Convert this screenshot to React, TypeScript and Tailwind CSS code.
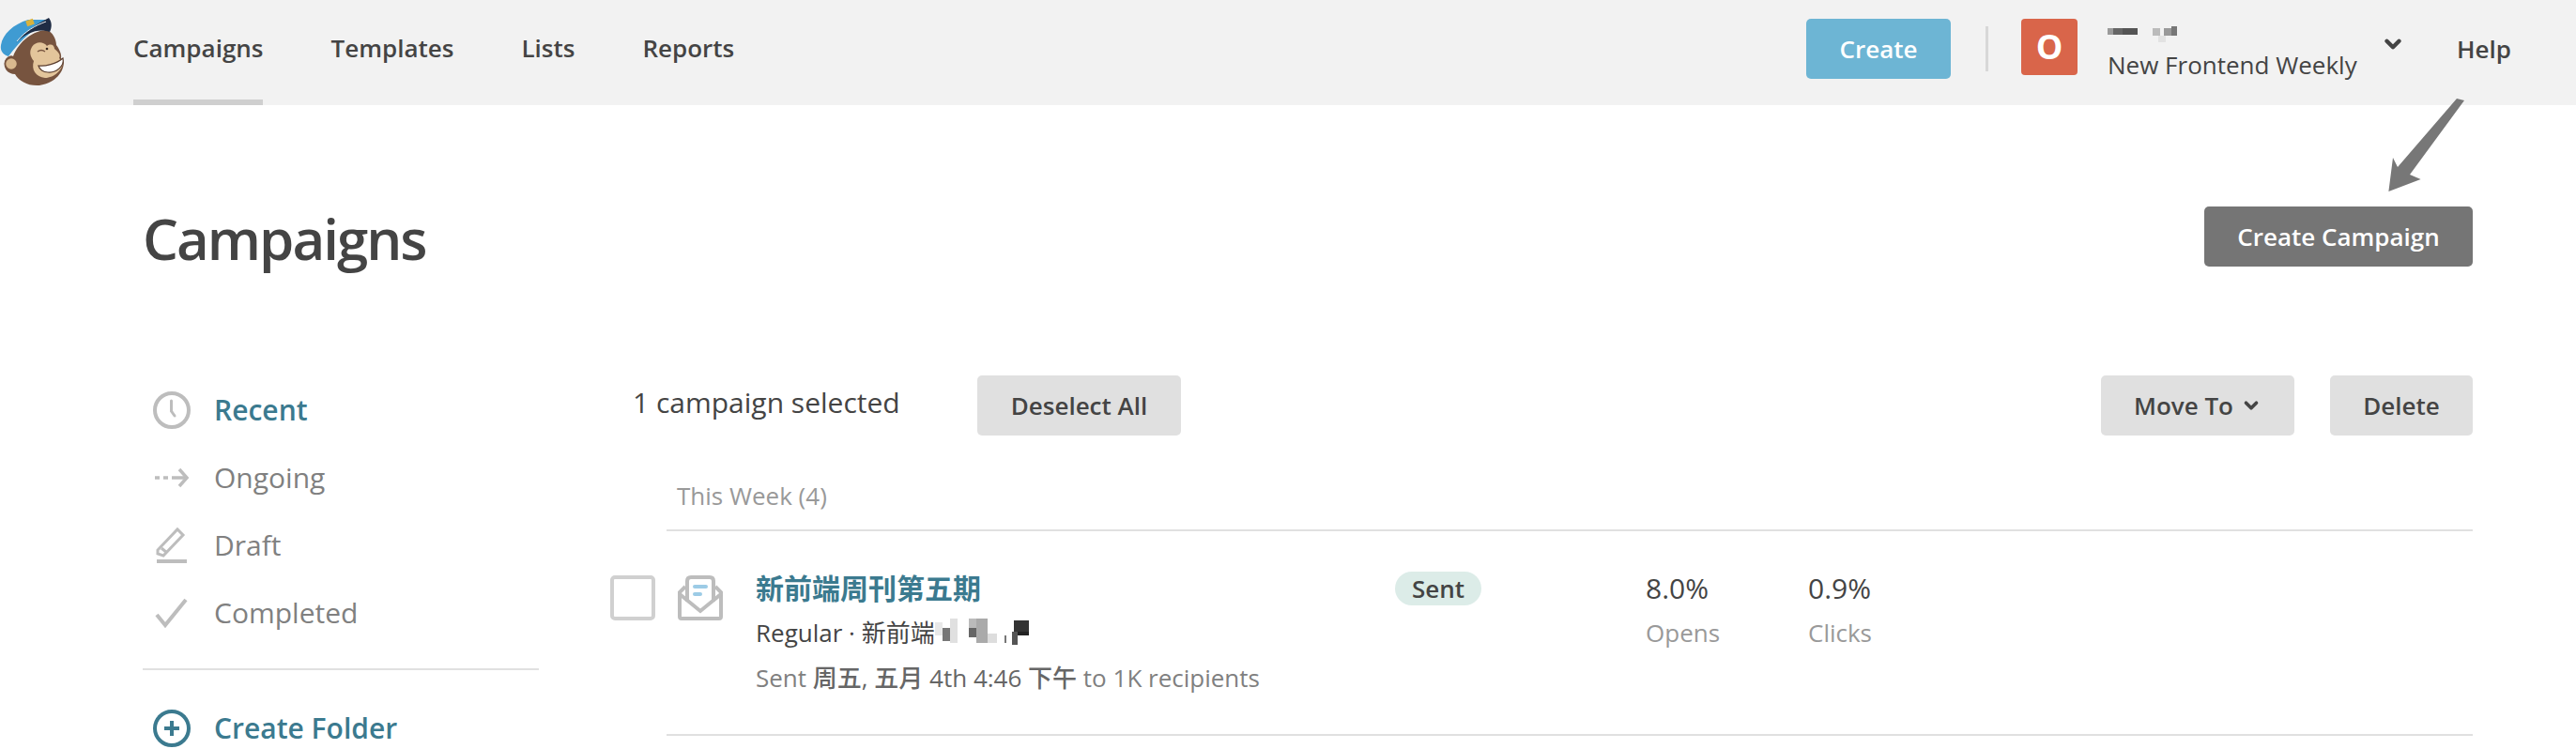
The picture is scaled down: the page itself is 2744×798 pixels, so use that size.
import React from "react";
import { ChevronDown } from "lucide-react";

const font = { fontFamily: '"Open Sans", "Noto Sans CJK SC", sans-serif' };

const Mascot = () => (
  <svg width="72" height="100" viewBox="0 0 72 100" className="shrink-0">
    <path d="M14 60 C20 44 36 32 50 32 C56 34 60 42 60 48 C63 52 66 58 65 62 L68 66 C68 76 60 88 42 91 C30 92 20 86 16 79 C8 79 3 72 5 65 C7 60 12 58 14 60 Z" fill="#77543f" />
    <circle cx="12" cy="68" r="6.5" fill="#d9b98f" stroke="#77543f" strokeWidth="1.5" />
    <path d="M34 50 C38 44 46 44 50 49 C54 46 58 48 58 52 C62 55 65 59 63 62 L67 66 C67 74 58 83 48 83 C38 82 33 74 36 65 C32 60 31 55 34 50 Z" fill="#e3c59b" />
    <path d="M41 70 C48 71 60 68 67 62 C69 70 60 78 51 77 C46 77 42 74 41 70 Z" fill="#fff" stroke="#5a3d2e" strokeWidth="1.2" />
    <path d="M40 55 q4 -3 8 0" fill="none" stroke="#77543f" strokeWidth="1.5" />
    <circle cx="50" cy="52" r="1.3" fill="#3a2a20" />
    <path d="M1 48 C3 36 14 26 30 21 L50 21 C40 28 22 42 9 60 C3 58 0 54 1 48 Z" fill="#3f9bd2" />
    <path d="M17 46 C26 34 40 25 52 19 C56 24 55 30 53 34 C42 30 28 34 17 46 Z" fill="#1f2c44" />
    <path d="M18 44 C27 33 38 27 49 23" fill="none" stroke="#e8eef2" strokeWidth="1" />
    <rect x="28" y="21" width="8" height="6" fill="#d9b23c" transform="rotate(-20 32 24)" />
  </svg>
);

const Mosaic = ({ cells, w, h }: { cells: [number, number, number, number, string][]; w: number; h: number }) => (
  <svg width={w} height={h} viewBox={`0 0 ${w} ${h}`} className="shrink-0">
    {cells.map(([x, y, cw, ch, c], i) => (
      <rect key={i} x={x} y={y} width={cw} height={ch} fill={c} />
    ))}
  </svg>
);

const Clock = () => (
  <svg width="40" height="40" viewBox="0 0 40 40" fill="none" stroke="#bdbdbd">
    <circle cx="20" cy="20" r="18" strokeWidth="4" />
    <path d="M19.5 10 V21 L23 26" strokeWidth="3" strokeLinecap="round" />
  </svg>
);

const Ongoing = () => (
  <svg width="40" height="40" viewBox="0 0 40 40" fill="none" stroke="#bdbdbd" strokeWidth="3.5">
    <path d="M2 20 H7 M11 20 H16 M20 20 H34" />
    <path d="M28 11 L36 20 L28 29" />
  </svg>
);

const Pencil = () => (
  <svg width="40" height="40" viewBox="0 0 40 40" fill="none" stroke="#bdbdbd" strokeWidth="3">
    <path d="M5 29 V25 L26 3 L32 9 L11 31 Z" />
    <path d="M9 23 L15 28" />
    <rect x="4" y="35" width="32" height="4" fill="#bdbdbd" stroke="none" />
  </svg>
);

const Check = () => (
  <svg width="40" height="40" viewBox="0 0 40 40" fill="none" stroke="#bdbdbd" strokeWidth="4">
    <path d="M4 22 L13 33 L35 6" />
  </svg>
);

const PlusCircle = () => (
  <svg width="40" height="40" viewBox="0 0 40 40" fill="none" stroke="#3b7a8f">
    <circle cx="20" cy="20" r="18" strokeWidth="4" />
    <path d="M20 12 V28 M12 20 H28" strokeWidth="4" />
  </svg>
);

const Envelope = () => (
  <svg width="48" height="48" viewBox="0 0 48 48" fill="none">
    <path d="M8 12 L2 18 V44 Q2 46 4 46 H44 Q46 46 46 44 V18 L40 12" stroke="#bdbdbd" strokeWidth="4" />
    <path d="M2 20 L24 38 L46 20" stroke="#bdbdbd" strokeWidth="4" />
    <path d="M10 28 V6 Q10 2 14 2 H34 Q38 2 38 6 V28" stroke="#bdbdbd" strokeWidth="4" />
    <rect x="16" y="10" width="16" height="4" rx="2" fill="#9ccbe6" />
    <rect x="16" y="18" width="10" height="4" rx="2" fill="#9ccbe6" />
  </svg>
);

const SideItem = ({ icon, label, active }: { icon: React.ReactNode; label: string; active?: boolean }) => (
  <div className="flex items-center h-[72px] pl-[11px] gap-[25px]">
    {icon}
    <span className={`text-[30px] -mt-[2px] ${active ? "text-[#3b7a8f] font-semibold" : "text-[#808080]"}`}>{label}</span>
  </div>
);

const GrayButton = ({ children, className }: { children: React.ReactNode; className: string }) => (
  <button type="button" className={`h-16 rounded-[5px] bg-[#e0e0e0] text-[#444] text-[26px] font-semibold flex items-center justify-center ${className}`}>
    {children}
  </button>
);

export default function App() {
  return (
    <div className="relative w-[2744px] h-[798px] overflow-hidden bg-white" style={font}>
      {/* Header */}
      <header className="flex items-center h-28 bg-[#f2f2f2] text-[#444] text-[26px] font-semibold">
        <div className="w-[142px] shrink-0 flex items-start h-full">
          <Mascot />
        </div>
        <nav className="flex h-full gap-[72px]">
          <a className="flex items-center pb-1 border-b-[6px] border-[#cfcfcf]">Campaigns</a>
          <a className="flex items-center pb-[10px]">Templates</a>
          <a className="flex items-center pb-[10px]">Lists</a>
          <a className="flex items-center pb-[10px]">Reports</a>
        </nav>
        <div className="ml-auto flex items-center h-full">
          <button type="button" className="w-[154px] h-16 -mt-[8px] rounded-[5px] bg-[#6db5d4] text-white">Create</button>
          <div className="w-[3px] h-12 ml-[37px] -mt-[8px] bg-[#d8d8d8]" />
          <div className="flex items-center justify-center w-[60px] h-[60px] ml-[35px] -mt-[12px] rounded-[4px] bg-[#d9654a] text-white text-[36px] font-bold">O</div>
          <div className="ml-8 w-[291px] flex flex-col mt-[1px] font-normal">
            <Mosaic
              w={76}
              h={18}
              cells={[
                [0, 3, 6, 7, "#9a9a9a"],
                [6, 3, 10, 7, "#666"],
                [16, 3, 16, 7, "#555"],
                [48, 3, 8, 8, "#bbb"],
                [60, 3, 8, 8, "#999"],
                [68, 1, 6, 10, "#777"],
                [54, 11, 8, 7, "#e2e2e2"],
              ]}
            />
            <span className="text-[#444] text-[26px] leading-[36px] mt-[6px]">New Frontend Weekly</span>
          </div>
          <ChevronDown size={26} strokeWidth={4} className="-mt-[18px] text-[#444]" />
          <span className="ml-[55px] mr-[69px] -mt-[8px]">Help</span>
        </div>
      </header>

      {/* Arrow annotation */}
      <svg width="90" height="110" viewBox="0 0 90 110" className="absolute left-[2540px] top-[100px]">
        <polygon points="4.4,104 9,68 14,78 77,5 85,7 27,86 38.6,91" fill="#777" />
      </svg>

      {/* Page */}
      <main className="pl-[152px] pr-[110px] text-[#444]">
        <div className="flex items-center justify-between h-16 mt-[108px]">
          <h1 className="text-[60px] font-semibold text-[#444] tracking-[-2px] mt-[3px]">Campaigns</h1>
          <button type="button" className="w-[286px] h-16 rounded-[5px] bg-[#757575] text-white text-[26px] font-semibold">
            Create Campaign
          </button>
        </div>

        <div className="flex gap-[76px] mt-[116px]">
          {/* Sidebar */}
          <aside className="w-[422px] shrink-0 pt-[1px]">
            <SideItem icon={<Clock />} label="Recent" active />
            <SideItem icon={<Ongoing />} label="Ongoing" />
            <SideItem icon={<Pencil />} label="Draft" />
            <SideItem icon={<Check />} label="Completed" />
            <div className="h-[2px] bg-[#e0e0e0] mt-[23px] mb-[26px]" />
            <SideItem icon={<PlusCircle />} label="Create Folder" active />
          </aside>

          {/* Campaign list */}
          <section className="flex-1">
            <div className="flex items-center h-16">
              <span className="ml-[24px] w-[367px] -mt-[7px] text-[30px] text-[#444]">1 campaign selected</span>
              <GrayButton className="w-[217px]">Deselect All</GrayButton>
              <GrayButton className="w-[206px] ml-auto gap-2">
                Move To <ChevronDown size={22} strokeWidth={4} />
              </GrayButton>
              <GrayButton className="w-[152px] ml-[38px]">Delete</GrayButton>
            </div>

            <div className="ml-[60px] mt-[46px] pl-[11px] text-[26px] text-[#999] leading-[36px]">This Week (4)</div>
            <div className="ml-[60px] h-[2px] mt-[18px] bg-[#e0e0e0]" />

            <div className="flex h-[216px] pt-[47px]">
              <div className="w-12 h-12 rounded-[5px] border-4 border-[#d0d0d0] shrink-0" />
              <div className="ml-6 shrink-0"><Envelope /></div>
              <div className="ml-[35px] w-[681px] shrink-0">
                <div className="text-[30px] font-bold text-[#3b7a8f] leading-[40px] -mt-[6px]">新前端周刊第五期</div>
                <div className="flex items-center text-[26px] text-[#444] leading-[36px] mt-[9px]">
                  Regular · 新前端
                  <Mosaic
                    w={110}
                    h={30}
                    cells={[
                      [0, 4, 8, 14, "#e8e8e8"],
                      [8, 10, 8, 14, "#777"],
                      [16, 0, 8, 26, "#e0e0e0"],
                      [36, 0, 8, 10, "#bbb"],
                      [36, 10, 8, 10, "#666"],
                      [44, 0, 12, 26, "#aaa"],
                      [56, 16, 10, 10, "#ddd"],
                      [74, 18, 2, 8, "#777"],
                      [84, 2, 16, 12, "#333"],
                      [82, 14, 6, 14, "#555"],
                      [88, 14, 12, 4, "#222"],
                    ]}
                  />
                </div>
                <div className="text-[26px] text-[#808080] leading-[36px] mt-[12px]">
                  Sent <span className="font-medium text-[#666]">周五, 五月 4th 4:46 下午</span> to 1K recipients
                </div>
              </div>
              <div className="w-[267px] shrink-0">
                <span className="inline-flex items-center justify-center w-[92px] h-9 -mt-[4px] rounded-full bg-[#dcece8] text-[26px] font-semibold text-[#444]">Sent</span>
              </div>
              <div className="w-[173px] shrink-0">
                <div className="text-[30px] font-medium leading-[40px] -mt-[6px] text-[#444]">8.0%</div>
                <div className="text-[26px] text-[#999] leading-[36px] mt-[9px]">Opens</div>
              </div>
              <div>
                <div className="text-[30px] font-medium leading-[40px] -mt-[6px] text-[#444]">0.9%</div>
                <div className="text-[26px] text-[#999] leading-[36px] mt-[9px]">Clicks</div>
              </div>
            </div>
            <div className="ml-[60px] h-[2px] bg-[#e0e0e0]" />
          </section>
        </div>
      </main>
    </div>
  );
}
